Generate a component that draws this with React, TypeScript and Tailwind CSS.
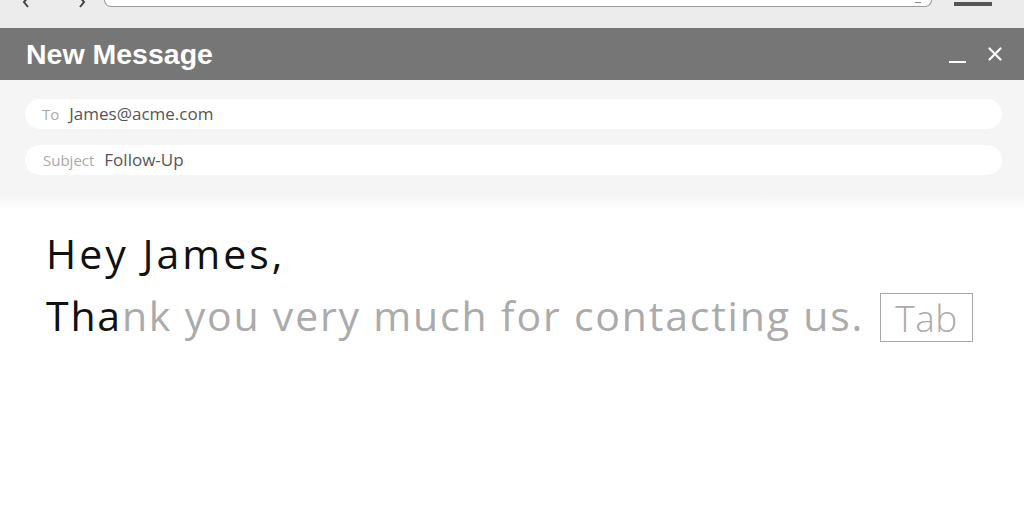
import React from "react";

export default function App() {
  return (
    <div className="w-[1024px] h-[512px] bg-white overflow-hidden flex flex-col" style={{ fontFamily: '"Open Sans", "Noto Sans", sans-serif' }}>
      {/* browser chrome */}
      <div className="h-[28px] bg-[#ececec] flex items-start shrink-0">
        <svg width="12" height="8" viewBox="0 0 12 8" className="ml-[20px]">
          <path d="M9 -4 L4 2 L8 7" stroke="#444" strokeWidth="2" fill="none" />
        </svg>
        <svg width="12" height="8" viewBox="0 0 12 8" className="ml-[44px]">
          <path d="M3 -4 L8 2 L4 7" stroke="#444" strokeWidth="2" fill="none" />
        </svg>
        <div className="ml-[16px] w-[828px] h-[7px] bg-white border-x border-b border-[#9a9a9a] rounded-b-[12px] flex justify-end pr-[10px]">
          <div className="w-[6px] h-[3px] border-b border-[#888]" />
        </div>
        <div className="ml-[22px] mt-[2px] w-[38px] h-[4px] bg-[#555]" />
      </div>

      {/* title bar */}
      <div className="h-[52px] bg-[#767676] flex items-center justify-between pl-[26px] pr-[22px] shrink-0">
        <span className="text-white font-bold text-[28.5px] leading-none" style={{ fontFamily: '"Liberation Sans", Arial, sans-serif' }}>
          New Message
        </span>
        <div className="flex items-center gap-[22px]">
          <div className="w-[17px] h-[2px] bg-white mt-[16px]" />
          <svg width="14" height="14" viewBox="0 0 14 14">
            <path d="M1.5 1.5 L12.5 12.5 M12.5 1.5 L1.5 12.5" stroke="white" strokeWidth="2.2" strokeLinecap="round" />
          </svg>
        </div>
      </div>

      {/* fields */}
      <div className="bg-[#f5f5f5] pt-[19px] pb-[20px] pl-[25px] pr-[22px] flex flex-col gap-[16px] shrink-0">
        <div className="h-[30px] bg-white rounded-full flex items-center pl-[17px]">
          <span className="text-[15px] text-[#aaaaaa] mr-[10px]">To</span>
          <span className="text-[17px] text-[#555555]">James@acme.com</span>
        </div>
        <div className="h-[30px] bg-white rounded-full flex items-center pl-[18px]">
          <span className="text-[15px] text-[#aaaaaa] mr-[10px]">Subject</span>
          <span className="text-[17px] text-[#555555]">Follow-Up</span>
        </div>
      </div>
      <div className="h-[14px] bg-gradient-to-b from-[#f5f5f5] to-white shrink-0" />

      {/* body */}
      <div className="pl-[46px] pt-[13px] flex flex-col text-[41px] leading-[62px] tracking-[1.8px]">
        <div className="text-[#111111] tracking-[3px]">Hey James,</div>
        <div className="flex items-center">
          <span className="text-[#111111]">Tha</span>
          <span className="text-[#ababab]">nk you very much for contacting us.</span>
          <span className="ml-[16px] mt-[4px] border border-[#a8a8a8] h-[49px] w-[93px] justify-center flex items-center text-[37px] leading-none text-[#ababab] font-light tracking-[0.5px]">
            Tab
          </span>
        </div>
      </div>
    </div>
  );
}
